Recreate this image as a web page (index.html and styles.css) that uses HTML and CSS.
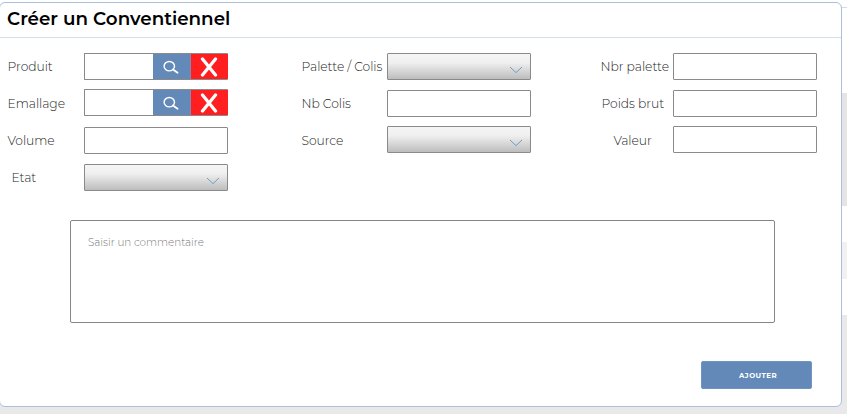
FILE: index.html
```html
<!DOCTYPE html>
<html lang="fr">
<head>
<meta charset="utf-8">
<title>Créer un Conventiennel</title>
<link rel="stylesheet" href="styles.css">
</head>
<body>
<svg width="0" height="0" class="defs">
  <symbol id="search" viewBox="0 0 18 16"><ellipse cx="7.3" cy="6.2" rx="5.2" ry="4.7" fill="none" stroke="#fff" stroke-width="1.4"/><path d="M11 9.5 15.6 12.8" stroke="#fff" stroke-width="1.7" stroke-linecap="round"/></symbol>
  <symbol id="cross" viewBox="0 0 18 20"><path d="M2.5 2 15.5 18M15.5 2 2.5 18" stroke="#fff" stroke-width="3.3" stroke-linecap="round"/></symbol>
  <symbol id="chevron" viewBox="0 0 14 8"><path d="M1 1 7 6.6 13 1" fill="none" stroke="#6f9fc0" stroke-width="1"/></symbol>
</svg>
<div class="page">
  <main class="card">
    <header class="header"><h1 class="title">Créer un Conventiennel</h1></header>
    <form class="form">
      <div class="fields">
        <div class="column">
          <div class="row"><span class="label produit">Produit</span><div class="control lookup"><b class="find"><svg><use href="#search"/></svg></b><b class="clear"><svg><use href="#cross"/></svg></b></div></div>
          <div class="row"><span class="label emallage">Emallage</span><div class="control lookup"><b class="find"><svg><use href="#search"/></svg></b><b class="clear"><svg><use href="#cross"/></svg></b></div></div>
          <div class="row"><span class="label volume">Volume</span><div class="control"></div></div>
          <div class="row"><span class="label etat">Etat</span><div class="control select"><svg><use href="#chevron"/></svg></div></div>
        </div>
        <div class="column middle">
          <div class="row"><span class="label palette">Palette / Colis</span><div class="control select"><svg><use href="#chevron"/></svg></div></div>
          <div class="row"><span class="label colis">Nb Colis</span><div class="control"></div></div>
          <div class="row"><span class="label source">Source</span><div class="control select"><svg><use href="#chevron"/></svg></div></div>
        </div>
        <div class="column last">
          <div class="row"><span class="label nbr">Nbr palette</span><div class="control"></div></div>
          <div class="row"><span class="label poids">Poids brut</span><div class="control"></div></div>
          <div class="row"><span class="label valeur">Valeur</span><div class="control"></div></div>
        </div>
      </div>
      <div class="comment"><span class="placeholder">Saisir un commentaire</span></div>
      <div class="actions"><div class="submit">AJOUTER</div></div>
    </form>
  </main>
  <aside class="backdrop"><i class="top"></i><i class="head"></i><i class="white"></i><i class="light"></i><i class="white last-row"></i></aside>
</div>
</body>
</html>
```
FILE: styles.css
```css
* { box-sizing: border-box; }
body { margin: 0; background: #e9e9e9; font-family: Montserrat, Inter, sans-serif; overflow: hidden; }
.defs { position: absolute; }
.page { display: flex; width: 847px; height: 414px; background: linear-gradient(#fff 315px, #e9e9e9 315px); }
.card { width: 843px; height: 405px; margin: 2px 0 0 -1px; background: #fff; border: 1px solid #a9bfdd; border-radius: 6px; flex: none; }
.header { height: 35px; border-bottom: 1px solid #d3deea; padding-left: 7px; }
.title { margin: 0; font-size: 18.3px; line-height: 32px; font-weight: 600; color: #000; white-space: nowrap; }
.fields { display: flex; height: 138px; margin-top: 15px; }
.column { width: 227.6px; padding-left: 7.6px; display: flex; flex-direction: column; gap: 10px; flex: none; }
.middle { width: 229px; margin-left: 74.4px; padding-left: 0; gap: 9.5px; }
.last { width: 217px; margin-left: 69.5px; padding-left: 0; gap: 9.5px; }
.row { display: flex; justify-content: space-between; height: 27px; }
.label { width: 0; font-size: 12.3px; font-weight: 300; line-height: 27px; color: #252525; white-space: nowrap; letter-spacing: -0.05px; }
.middle .label { margin-left: -0.5px; }
.source { position: relative; top: 1px; }
.etat { margin-left: 4px; }
.poids { margin-left: 1px; }
.valeur { margin-left: 13px; position: relative; top: 1px; }
.control { width: 144px; height: 27px; border: 1px solid #8a8a8a; border-radius: 1px; display: flex; justify-content: flex-end; flex: none; }
.lookup { border-right: 0; }
.row:nth-child(2) .lookup { margin-top: -1px; }
.find, .clear { display: flex; align-items: center; justify-content: center; height: 25px; }
.find { width: 38px; background: #6389b9; border-right: 1px solid #8e86a8; }
.find svg { width: 18px; height: 16px; margin-top: 2px; }
.clear { width: 37px; background: #ff1e20; }
.clear svg { width: 18px; height: 20px; }
.select { background: linear-gradient(#f5f5f5, #efefef 35%, #bdbdbd); align-items: flex-end; padding: 0 7px 5.5px 0; }
.select svg { width: 14px; height: 8px; }
.comment { width: 705px; height: 103px; margin: 29px 0 0 70px; border: 1px solid #858585; border-radius: 2px; padding: 13px 17px; }
.placeholder { display: block; font-size: 10.35px; line-height: 17px; font-weight: 300; color: #777; white-space: nowrap; }
.actions { display: flex; justify-content: flex-end; margin-top: 38px; padding-right: 29px; }
.submit { width: 111px; height: 28px; border-radius: 2px; border: 1px solid #7193bf; background: #6389b9; color: #fff; font-size: 7px; line-height: 28px; font-weight: 700; letter-spacing: 0.5px; text-align: center; padding-left: 3px; }
.backdrop { flex: 1; display: flex; flex-direction: column; }
.backdrop i { display: block; flex: none; }
.top { height: 8px; border-bottom: 1px solid #d3dbe8; }
.head { height: 113px; margin-top: 85px; background: #e4e4e4; }
.white { height: 36px; background: #fff; }
.light { height: 37px; background: #f1f1f1; }
```
